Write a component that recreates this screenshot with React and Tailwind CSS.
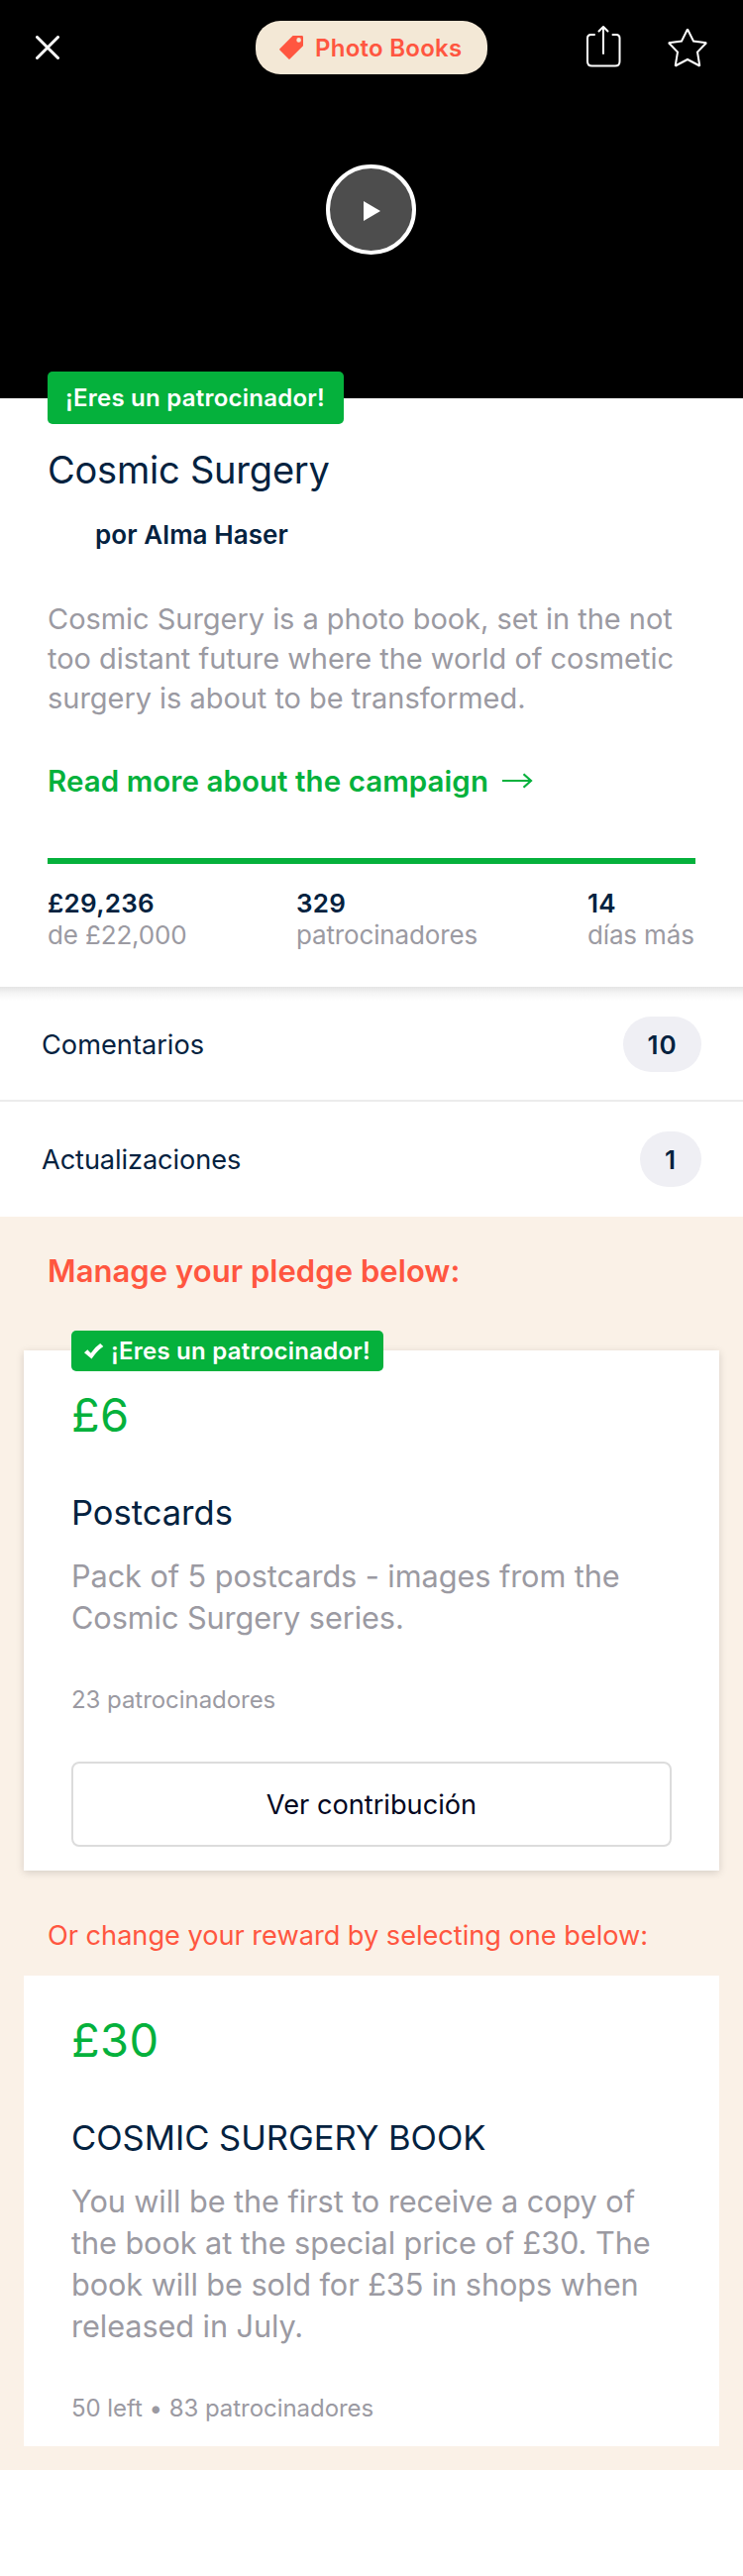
function CloseIcon() {
  return (
    <svg width="24" height="24" viewBox="0 0 24 24" fill="none" stroke="#fff" strokeWidth="3" strokeLinecap="round">
      <path d="M1.5 1.5 22.5 22.5M22.5 1.5 1.5 22.5" />
    </svg>
  );
}

function TagIcon() {
  return (
    <svg width="24" height="24" viewBox="0 0 24 24" fill="#ff5640">
      <path
        fillRule="evenodd"
        d="M13.6 0H22.6Q24 0 24 1.4V10.2L10.6 23.6Q10 24.2 9.4 23.6L.4 14.4Q-.2 13.8 .4 13.2ZM19.6 2.1a2.3 2.3 0 1 0 0 4.6a2.3 2.3 0 0 0 0-4.6Z"
      />
    </svg>
  );
}

function ShareIcon() {
  return (
    <svg width="36" height="44" viewBox="0 0 36 44" fill="none" stroke="#fff" strokeWidth="2" strokeLinecap="round" strokeLinejoin="round">
      <path d="M9 10H5.5Q2 10 2 13.5V37Q2 41.5 6.5 41.5H30Q34.5 41.5 34.5 37V13.5Q34.5 10 31 10H27.5" />
      <path d="M18 29V2M13.5 6.5 18 2 22.5 6.5" />
    </svg>
  );
}

function StarIcon() {
  return (
    <svg width="42" height="42" viewBox="0 0 42 42" fill="none" stroke="#fff" strokeWidth="2" strokeLinejoin="miter" strokeMiterlimit="2">
      <path d="M21 2.5 27 14.5 40 16.3 31 25.5 33.3 39.5 21 33 8.7 39.5 11 25.5 2 16.3 15 14.5Z" />
    </svg>
  );
}

function CheckIcon() {
  return (
    <svg width="20" height="16" viewBox="0 0 20 16" fill="#fff">
      <path d="M0 9.2 3.3 6.2 6.7 9.8Q10.8 3.5 16.2 0L19.3 2.9Q12.5 7.6 7.5 15.6Z" />
    </svg>
  );
}

function Stat({ value, label }) {
  return (
    <div className="leading-8">
      <p className="font-semibold tracking-[0.25px] text-[#04223f]">{value}</p>
      <p className="tracking-[-0.15px] text-[#9b9aa2]">{label}</p>
    </div>
  );
}

function Count({ children, width }) {
  return (
    <span className={`flex h-14 items-center justify-center rounded-full bg-[#efeff4] text-[26px] font-semibold tracking-[1px] ${width}`}>
      {children}
    </span>
  );
}

function Reward({ price, title, text, note }) {
  return (
    <>
      <p className="text-[47px] leading-14 tracking-[0.4px] text-[#05b13c]">{price}</p>
      <h3 className="mt-[51px] text-[34.5px] leading-10 text-[#04223f]">{title}</h3>
      <p className="mt-[23px] text-[30.7px] leading-[42px] tracking-[-0.08px] text-[#9b9aa2]">
        {text.map((line) => (
          <span key={line} className="block whitespace-nowrap">{line}</span>
        ))}
      </p>
      <p className="mt-[46px] text-[24px] leading-8 tracking-[-0.05px] text-[#9b9aa2]">{note}</p>
    </>
  );
}

export default function App() {
  return (
    <main className="min-h-[2600px] w-[750px] bg-white font-[Inter,sans-serif] text-[#04223f]">
      <header className="flex h-[402px] flex-col bg-black">
        <div className="flex h-24 items-center pr-[35px] pl-9">
          <button aria-label="Cerrar"><CloseIcon /></button>
          <div className="ml-[198px] flex h-[54px] w-[234px] items-center rounded-[25px] bg-[#f3e8d6] pl-6">
            <TagIcon />
            <span className="ml-3 pt-0.5 text-[24px] leading-8 font-semibold tracking-[0.26px] whitespace-nowrap text-[#ff5640]">
              Photo Books
            </span>
          </div>
          <div className="ml-auto flex items-center gap-[46px]">
            <button aria-label="Compartir" className="-mt-0.5"><ShareIcon /></button>
            <button aria-label="Guardar"><StarIcon /></button>
          </div>
        </div>
        <button
          aria-label="Reproducir"
          className="mt-[70px] ml-[329px] flex h-[91px] w-[91px] items-center rounded-full border-4 border-white bg-[#4d4d4d] pl-[34px]"
        >
          <svg width="17" height="20" viewBox="0 0 17 20" fill="#fff" className="mt-0.5">
            <path d="M0 0 17 10 0 20Z" />
          </svg>
        </button>
      </header>

      <section className="px-12 pb-9">
        <div className="relative -mt-[27px] flex h-[53px] w-[299px] items-center rounded-[5px] bg-[#05b13c] pl-[18px] text-[24px] font-semibold tracking-[0.24px] whitespace-nowrap text-white">
          ¡Eres un patrocinador!
        </div>
        <h1 className="mt-[22px] text-[38px] leading-12 tracking-[-0.22px]">Cosmic Surgery</h1>
        <p className="mt-[26px] pl-12 text-[26px] leading-8 font-semibold tracking-[0.08px]">por Alma Haser</p>
        <p className="mt-[49px] text-[29px] leading-10 tracking-[-0.04px] whitespace-nowrap text-[#9b9aa2]">
          Cosmic Surgery is a photo book, set in the not
          <br />
          too distant future where the world of cosmetic
          <br />
          surgery is about to be transformed.
        </p>
        <div className="mt-[43px] flex items-center text-[29.5px] leading-10 font-semibold tracking-[0.06px] text-[#05b13c]">
          Read more about the campaign
          <svg width="31" height="16" viewBox="0 0 31 16" fill="none" stroke="#05b13c" strokeWidth="2.2" className="ml-3.5">
            <path d="M0 8H28.5M21.5 1.2 29 8 21.5 14.8" />
          </svg>
        </div>
        <div className="mt-[58px] h-1.5 w-[654px] bg-[#05b13c]" />
        <div className="mt-6 flex w-[654px] text-[26px]">
          <div className="w-[251px]"><Stat value="£29,236" label="de £22,000" /></div>
          <div className="w-[294px]"><Stat value="329" label="patrocinadores" /></div>
          <div className="whitespace-nowrap"><Stat value="14" label="días más" /></div>
        </div>
      </section>

      <nav className="text-[27.2px]">
        <div className="flex h-[116px] items-center justify-between border-b-2 border-[#ececec] bg-linear-to-b from-[#e4e4e4] via-[#f6f6f6] via-[7px] to-white to-[14px] px-[42px] pt-0.5">
          <span className="pt-0.5">Comentarios</span>
          <Count width="w-[79px]">10</Count>
        </div>
        <div className="flex h-[116px] items-center justify-between px-[42px]">
          <span className="pt-0.5 tracking-[-0.1px]">Actualizaciones</span>
          <Count width="w-[62px]">1</Count>
        </div>
      </nav>

      <section className="bg-[#faf1e7] px-6 pt-[35px] pb-6">
        <h2 className="pl-6 text-[31px] leading-10 font-semibold tracking-[0.05px] text-[#ff5640]">
          Manage your pledge below:
        </h2>
        <article className="mt-[60px] flex flex-col bg-white px-12 pb-6 shadow-[0_2px_8px_rgba(0,0,0,0.15)]">
          <div className="-mt-5 mb-4 flex h-[41px] w-[315px] items-center rounded-[5px] bg-[#05b13c] pl-[13px] text-[24px] font-semibold tracking-[0.24px] whitespace-nowrap text-white">
            <CheckIcon />
            <span className="ml-[7px]">¡Eres un patrocinador!</span>
          </div>
          <Reward
            price="£6"
            title="Postcards"
            text={["Pack of 5 postcards - images from the", "Cosmic Surgery series."]}
            note="23 patrocinadores"
          />
          <button className="mt-[46px] flex h-[86px] w-full items-center justify-center rounded-lg border-2 border-[#dcdcdc] pt-0.5 text-[27.2px] text-[#020621]">
            Ver contribución
          </button>
        </article>
        <p className="mt-[46px] pl-6 text-[27.2px] leading-10 tracking-[-0.03px] whitespace-nowrap text-[#ff5640]">
          Or change your reward by selecting one below:
        </p>
        <article className="mt-5 bg-white px-12 pt-[37px] pb-[22px]">
          <Reward
            price="£30"
            title="COSMIC SURGERY BOOK"
            text={[
              "You will be the first to receive a copy of",
              "the book at the special price of £30. The",
              "book will be sold for £35 in shops when",
              "released in July.",
            ]}
            note="50 left • 83 patrocinadores"
          />
        </article>
      </section>
    </main>
  );
}
